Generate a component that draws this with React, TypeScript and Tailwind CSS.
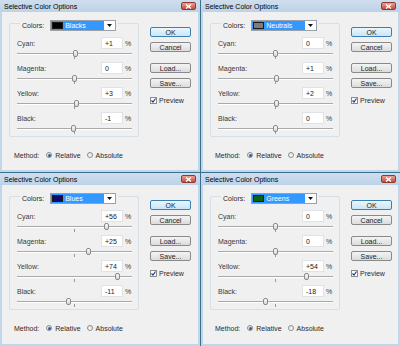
import React from "react";

interface DialogProps {
  colorName: string;
  swatch: string;
  values: number[];
}

const channels = ["Cyan:", "Magenta:", "Yellow:", "Black:"];

const fmt = (v: number) => (v > 0 ? `+${v}` : `${v}`);

const CloseButton = () => (
  <div className="flex h-[8px] w-[15px] items-center justify-center rounded-[2px] border border-[#8d3b31] bg-linear-to-b from-[#e8a296] to-[#c4483a]">
    <svg width="7" height="5" viewBox="0 0 7 5">
      <path d="M1 0.5 L6 4.5 M6 0.5 L1 4.5" stroke="#fff" strokeWidth="1.4" />
    </svg>
  </div>
);

const Slider = ({ value }: { value: number }) => {
  // track runs 115px, centre sits at 57.5
  const left = 57.5 + (value / 100) * 57.5 - 2.5;
  return (
    <div className="relative h-[13px] w-full">
      <div className="absolute left-0 right-0 top-[4px] h-px bg-[#a9a9a9]" />
      <div className="absolute left-0 right-0 top-[5px] h-px bg-white" />
      <div className="absolute left-[57px] top-[7px] h-[3px] w-px bg-[#9a9a9a]" />
      <div
        className="absolute top-[1px] h-[7px] w-[5px] rounded-[2px] border border-[#8a8a8a] bg-linear-to-b from-[#fafafa] to-[#d8d8d8]"
        style={{ left }}
      />
    </div>
  );
};

const Btn = ({ label, primary }: { label: string; primary?: boolean }) => (
  <div
    className={
      primary
        ? "flex h-[10px] w-[41px] items-center justify-center rounded-[2px] border border-[#3c7fb1] bg-linear-to-b from-[#eaf6fd] to-[#c9e6f8] text-[7px] leading-none text-[#1e1e1e]"
        : "flex h-[10px] w-[41px] items-center justify-center rounded-[2px] border border-[#8a8a8a] bg-linear-to-b from-[#f4f4f4] to-[#dcdcdc] text-[7px] leading-none text-[#1e1e1e]"
    }
  >
    {label}
  </div>
);

const Radio = ({ on }: { on?: boolean }) => (
  <div className="flex h-[6px] w-[6px] items-center justify-center rounded-full border border-[#8c8c8c] bg-linear-to-b from-[#e6e6e6] to-[#fafafa]">
    {on && <div className="h-[3px] w-[3px] rounded-full bg-[#2a5fa5]" />}
  </div>
);

const Dialog = ({ colorName, swatch, values }: DialogProps) => (
  <div className="flex h-full flex-col bg-[#c2d6ea]">
    <div className="flex h-[12px] items-center justify-between bg-linear-to-b from-[#cfdeee] to-[#bdd2e8] pl-[4px] pr-[4px]">
      <span className="text-[7px] leading-none text-black">Selective Color Options</span>
      <CloseButton />
    </div>
    <div className="mx-[2px] mb-[2px] flex flex-1 flex-col bg-[#f0f0f0] pl-[7px] pt-[8px]">
      <div className="flex">
        <div className="relative mt-[3px] h-[114px] w-[130px] rounded-[2px] border border-[#d5dfe5] pl-[7px] pr-[6px] pt-[13px]">
          <div className="absolute -top-[4px] left-[10px] flex items-center bg-[#f0f0f0] px-[2px]">
            <span className="text-[7px] leading-none text-[#2a2a2a]">Colors:</span>
            <div className="ml-[6px] flex h-[11px] w-[66px] border border-[#9aa0a8] bg-white">
              <div className="flex flex-1 items-center bg-[#3399ff] pl-[1px]">
                <div className="h-[7px] w-[11px] border border-[#1a1a1a]" style={{ background: swatch }} />
                <span className="ml-[2px] text-[7px] leading-none text-white">{colorName}</span>
              </div>
              <div className="flex w-[11px] items-center justify-center">
                <svg width="5" height="3" viewBox="0 0 5 3">
                  <path d="M0 0 L5 0 L2.5 3 Z" fill="#111" />
                </svg>
              </div>
            </div>
          </div>
          {channels.map((ch, i) => (
            <div key={ch} className="flex flex-col">
              <div className="flex h-[12px] items-center">
                <span className="flex-1 text-[7px] leading-none text-[#3a3a3a]">{ch}</span>
                <div className="flex h-[12px] w-[22px] items-center border border-[#dfe3e8] bg-white pl-[3px] text-[7px] leading-none text-[#222]">
                  {fmt(values[i])}
                </div>
                <span className="ml-[2px] w-[7px] text-[7px] leading-none text-[#3a3a3a]">%</span>
              </div>
              <Slider value={values[i]} />
            </div>
          ))}
        </div>
        <div className="ml-[11px] flex flex-col pt-[7px]">
          <Btn label="OK" primary />
          <div className="mt-[5px]">
            <Btn label="Cancel" />
          </div>
          <div className="mt-[11px]">
            <Btn label="Load..." />
          </div>
          <div className="mt-[5px]">
            <Btn label="Save..." />
          </div>
          <div className="mt-[9px] flex items-center">
            <div className="flex h-[7px] w-[7px] items-center justify-center border border-[#8c8c8c] bg-white">
              <svg width="5" height="5" viewBox="0 0 5 5">
                <path d="M0.5 2.5 L2 4 L4.5 0.5" stroke="#1c3f8c" strokeWidth="1.2" fill="none" />
              </svg>
            </div>
            <span className="ml-[2px] text-[7px] leading-none text-[#2a2a2a]">Preview</span>
          </div>
        </div>
      </div>
      <div className="ml-[5px] mt-[13px] flex h-[10px] items-center text-[7px] leading-none text-[#2a2a2a]">
        <span>Method:</span>
        <div className="ml-[7px]">
          <Radio on />
        </div>
        <span className="ml-[3px]">Relative</span>
        <div className="ml-[6px]">
          <Radio />
        </div>
        <span className="ml-[3px]">Absolute</span>
      </div>
    </div>
  </div>
);

const dialogs: DialogProps[] = [
  { colorName: "Blacks", swatch: "#000000", values: [1, 0, 3, -1] },
  { colorName: "Neutrals", swatch: "#7d7d7d", values: [0, 1, 2, 0] },
  { colorName: "Blues", swatch: "#0b0b6a", values: [56, 25, 74, -11] },
  { colorName: "Greens", swatch: "#0a6418", values: [0, 0, 54, -18] },
];

export default function App() {
  return (
    <div className="grid h-[346px] w-[400px] grid-cols-[200px_199px] grid-rows-[172px_173px] gap-px bg-[#3d6f8e] font-['Liberation_Sans',Arial,sans-serif]">
      {dialogs.map((d) => (
        <Dialog key={d.colorName} {...d} />
      ))}
    </div>
  );
}
